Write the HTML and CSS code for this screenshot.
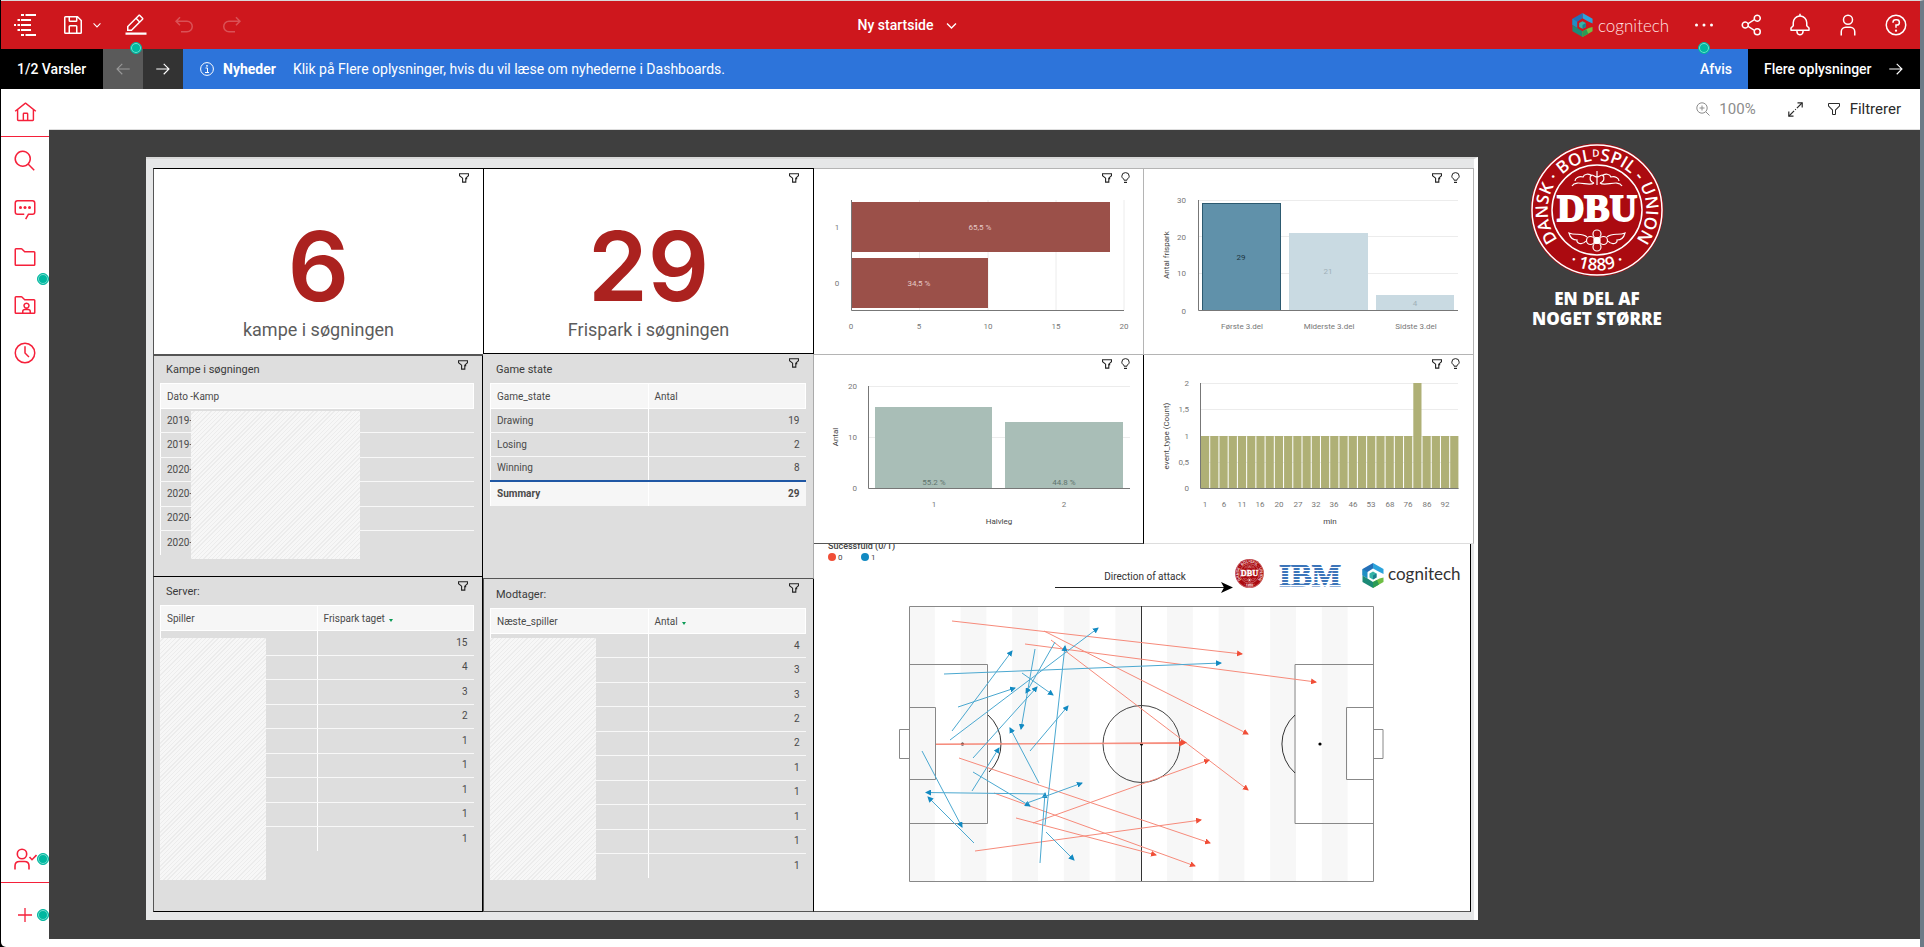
FILE: index.html
```html
<!DOCTYPE html>
<html lang="da">
<head>
<meta charset="utf-8">
<title>Ny startside</title>
<link rel="stylesheet" href="styles.css">
</head>
<body>
<svg class="defs" aria-hidden="true">
  <symbol id="i-filter" viewBox="0 0 32 32"><path d="M18,28H14a2,2,0,0,1-2-2V18.41L4.59,11A2,2,0,0,1,4,9.59V6A2,2,0,0,1,6,4H26a2,2,0,0,1,2,2V9.59A2,2,0,0,1,27.41,11L20,18.41V26A2,2,0,0,1,18,28ZM6,6V9.59l8,8V26h4V17.59l8-8V6Z"/></symbol>
  <symbol id="i-pin" viewBox="0 0 10 10"><path d="M.5.8h9v1.8L6.8 5.2v3.9H3.6V5.2L.5 2.6z" fill="none" stroke="currentColor" stroke-width="1.1"/><path d="M6.8 5h1.4v1.3H6.8z"/></symbol>
  <symbol id="i-bulb" viewBox="0 0 9 12"><path d="M3 8.2V7.3C1.600 6.500.8 5.400.8 4.200a3.700 3.600 0 0 1 7.400 0C8.200 5.400 7.400 6.500 6 7.300v.9z" fill="none" stroke="currentColor" stroke-width="1"/><path d="M3 9.800h3v1.200H3z"/></symbol>
  <symbol id="i-right" viewBox="0 0 32 32"><path d="M18 6L16.570 7.393 24.150 15H4V17H24.150L16.570 24.573 18 26 28 16z"/></symbol>
  <symbol id="i-chevron" viewBox="0 0 16 16"><path d="M2.500 5.500L8 11l5.500-5.500" fill="none" stroke="currentColor" stroke-width="1.700"/></symbol>
  <symbol id="i-undo" viewBox="0 0 32 32"><path d="M20,10H7.815l3.587-3.586L10,5,4,11,10,17l1.402-1.415L7.818,12H20a6,6,0,0,1,0,12H12v2h8a8,8,0,0,0,0-16Z"/></symbol>
  <symbol id="i-cog" viewBox="0 0 42 50">
    <path d="M21 0L42 12v10l-8-4-13-7z" fill="#2ba3dc"/>
    <path d="M21 0L0 12v13l10-7 11-7z" fill="#2470b8"/>
    <path d="M0 12v13l10 6V18z" fill="#1f8fc4"/>
    <path d="M0 25v13l21 12V38L10 31z" fill="#1c8a76"/>
    <path d="M21 50V38l13-7 8-2v9z" fill="#6fbe44"/>
    <path d="M21 50V38l8-4 4 9z" fill="#2c9b55"/>
    <path d="M21 17l7 4v8l-7 4-7-4v-8z" fill="#35b3a6"/><path d="M21 25l7-4v8l-7 4z" fill="#1b7f8c"/>
  </symbol>
</svg>

<div class="app">
  <header class="topbar">
    <div class="tools">
      <button class="tool" aria-label="Menu"><svg width="22" height="22" viewBox="0 0 22 22"><path d="M7 1h3M11.500 1H22M3.500 6H6M7 6h10M0 11h2M3.500 11H6M7 11h10M3.500 16H6M7 16h10M7 21h3M11.500 21H22" stroke="currentColor" stroke-width="2"/></svg></button>
      <button class="tool tool-save" aria-label="Gem"><svg width="24" height="24" viewBox="0 0 32 32"><path d="M27.710,9.290l-5-5A1,1,0,0,0,22,4H6A2,2,0,0,0,4,6V26a2,2,0,0,0,2,2H26a2,2,0,0,0,2-2V10A1,1,0,0,0,27.710,9.290ZM12,6h8v4H12Zm8,20H12V18h8Zm2,0V18a2,2,0,0,0-2-2H12a2,2,0,0,0-2,2v8H6V6h4v4a2,2,0,0,0,2,2h8a2,2,0,0,0,2-2V6.410l4,4V26Z"/></svg></button>
      <button class="tool tool-narrow" aria-label="Flere gem-valg"><svg width="10" height="10"><use href="#i-chevron"/></svg></button>
      <button class="tool" aria-label="Rediger"><svg width="24" height="24" viewBox="0 0 32 32"><path d="M2 26H30V29H2zM25.400 9c.8-.8.8-2 0-2.800l-3.600-3.600c-.8-.8-2-.8-2.800 0l-15 15V24h6.400L25.400 9zM20.400 4L24 7.600l-3 3L17.400 7 20.400 4zM6 22v-3.600l10-10 3.600 3.600-10 10H6z"/></svg><i class="beacon beacon-low"></i></button>
      <button class="tool faded" aria-label="Fortryd" disabled><svg width="24" height="24"><use href="#i-undo"/></svg></button>
      <button class="tool faded flip" aria-label="Annuller fortryd" disabled><svg width="24" height="24"><use href="#i-undo"/></svg></button>
    </div>
    <button class="title">Ny startside <svg width="13" height="13"><use href="#i-chevron"/></svg></button>
    <div class="brand"><svg width="21" height="24"><use href="#i-cog"/></svg>cognitech</div>
    <div class="tools">
      <button class="tool" aria-label="Mere"><svg width="24" height="24" viewBox="0 0 32 32"><circle cx="6" cy="16" r="2"/><circle cx="16" cy="16" r="2"/><circle cx="26" cy="16" r="2"/></svg><i class="beacon beacon-low"></i></button>
      <button class="tool" aria-label="Del"><svg width="24" height="24" viewBox="0 0 32 32"><path d="M23,20a5,5,0,0,0-3.890,1.890L11.800,17.320a4.460,4.460,0,0,0,0-2.640l7.310-4.570A5,5,0,1,0,18,7a4.790,4.790,0,0,0,.2,1.320l-7.310,4.570a5,5,0,1,0,0,6.220l7.310,4.570A4.790,4.790,0,0,0,18,25a5,5,0,1,0,5-5ZM23,4a3,3,0,1,1-3,3A3,3,0,0,1,23,4ZM7,19a3,3,0,1,1,3-3A3,3,0,0,1,7,19Zm16,9a3,3,0,1,1,3-3A3,3,0,0,1,23,28Z"/></svg></button>
      <button class="tool" aria-label="Notifikationer"><svg width="24" height="24" viewBox="0 0 32 32"><path d="M28.707,19.293,26,16.586V13a10.014,10.014,0,0,0-9-9.949V1H15V3.051A10.014,10.014,0,0,0,6,13v3.586L3.293,19.293A1,1,0,0,0,3,20v3a1,1,0,0,0,1,1h7v.777a5.152,5.152,0,0,0,4.500,5.199A5.006,5.006,0,0,0,21,25V24h7a1,1,0,0,0,1-1V20A1,1,0,0,0,28.707,19.293ZM19,25a3,3,0,0,1-6,0V24h6Zm8-3H5V20.414L7.707,17.707A1,1,0,0,0,8,17V13a8,8,0,0,1,16,0v4a1,1,0,0,0,.293.707L27,20.414Z"/></svg></button>
      <button class="tool" aria-label="Profil"><svg width="24" height="24" viewBox="0 0 32 32"><path d="M16 4a5 5 0 1 1-5 5 5 5 0 0 1 5-5m0-2a7 7 0 1 0 7 7A7 7 0 0 0 16 2zM26 30H24V25a5 5 0 0 0-5-5H13a5 5 0 0 0-5 5v5H6V25a7 7 0 0 1 7-7h6a7 7 0 0 1 7 7z"/></svg></button>
      <button class="tool" aria-label="Hjælp"><svg width="24" height="24" viewBox="0 0 32 32"><path d="M16,2A14,14,0,1,0,30,16,14,14,0,0,0,16,2Zm0,26A12,12,0,1,1,28,16,12,12,0,0,1,16,28Z"/><circle cx="16" cy="23.500" r="1.500"/><path d="M17,8H15.500A4.490,4.490,0,0,0,11,12.500V13h2v-.5A2.500,2.500,0,0,1,15.500,10H17a2.500,2.500,0,0,1,0,5H15v4.500h2V17a4.500,4.500,0,0,0,0-9Z"/></svg></button>
    </div>
  </header>

  <section class="notice">
    <div class="notice-count">1/2 Varsler</div>
    <button class="notice-nav notice-prev flip" aria-label="Forrige" disabled><svg width="18" height="18"><use href="#i-right"/></svg></button>
    <button class="notice-nav" aria-label="Næste"><svg width="18" height="18"><use href="#i-right"/></svg></button>
    <div class="notice-text">
      <svg width="14" height="14" viewBox="0 0 14 14"><circle cx="7" cy="7" r="6.400" fill="none" stroke="currentColor"/><path d="M5.500 6h2v4M5 10.500h4" fill="none" stroke="currentColor"/><circle cx="7" cy="3.800" r=".9"/></svg>
      <strong>Nyheder</strong>
      <span>Klik på Flere oplysninger, hvis du vil læse om nyhederne i Dashboards.</span>
    </div>
    <button class="notice-dismiss">Afvis</button>
    <button class="notice-more">Flere oplysninger <svg width="18" height="18"><use href="#i-right"/></svg></button>
  </section>

  <div class="body">
    <nav class="side">
      <button class="side-btn side-home" aria-label="Hjem"><svg width="23" height="23" viewBox="0 0 32 32"><path d="M16.612,2.214a1.010,1.010,0,0,0-1.243,0L1,13.419l1.243,1.572L4,13.621V26a2.004,2.004,0,0,0,2,2H26a2.004,2.004,0,0,0,2-2V13.630L29.757,15,31,13.428ZM18,26H14V18h4Zm2,0V18a2.002,2.002,0,0,0-2-2H14a2.002,2.002,0,0,0-2,2v8H6V12.062l10-7.790,10,7.800V26Z"/></svg></button>
      <button class="side-btn" aria-label="Søg"><svg width="24" height="24" viewBox="0 0 32 32"><path d="M29,27.586l-7.552-7.552a11.018,11.018,0,1,0-1.414,1.414L27.586,29ZM4,13a9,9,0,1,1,9,9A9.010,9.010,0,0,1,4,13Z"/></svg></button>
      <button class="side-btn" aria-label="Assistent"><svg width="24" height="24" viewBox="0 0 32 32"><path d="M17.740,30,16,29l4-7h6a2,2,0,0,0,2-2V8a2,2,0,0,0-2-2H6A2,2,0,0,0,4,8V20a2,2,0,0,0,2,2h9v2H6a4,4,0,0,1-4-4V8A4,4,0,0,1,6,4H26a4,4,0,0,1,4,4V20a4,4,0,0,1-4,4H21.160Z"/><circle cx="10" cy="14" r="2"/><circle cx="16" cy="14" r="2"/><circle cx="22" cy="14" r="2"/></svg></button>
      <button class="side-btn" aria-label="Indhold"><svg width="24" height="24" viewBox="0 0 32 32"><path d="M11.170,6l3.420,3.410.58.59H28V26H4V6h7.170m0-2H4A2,2,0,0,0,2,6V26a2,2,0,0,0,2,2H28a2,2,0,0,0,2-2V10a2,2,0,0,0-2-2H16L12.590,4.590A2,2,0,0,0,11.170,4Z"/></svg><i class="beacon beacon-corner"></i></button>
      <button class="side-btn" aria-label="Delt indhold"><svg width="24" height="24" viewBox="0 0 32 32"><path d="M11.170,6l3.420,3.410.58.59H28V26H4V6h7.170m0-2H4A2,2,0,0,0,2,6V26a2,2,0,0,0,2,2H28a2,2,0,0,0,2-2V10a2,2,0,0,0-2-2H16L12.590,4.590A2,2,0,0,0,11.170,4Z"/><path d="M18 13.500a3.300 3.300 0 1 0 .01 0M13 27v-2.500c0-2 1.500-2.500 3-2.500h4c1.500 0 3 .5 3 2.500V27" fill="none" stroke="currentColor" stroke-width="2"/></svg></button>
      <button class="side-btn" aria-label="Seneste"><svg width="24" height="24" viewBox="0 0 32 32"><path d="M16,30A14,14,0,1,1,30,16,14,14,0,0,1,16,30ZM16,4A12,12,0,1,0,28,16,12,12,0,0,0,16,4ZM20.590,22,15,16.410V7h2v8.580l5,5.010L20.590,22z"/></svg></button>
      <button class="side-btn side-admin" aria-label="Administrer"><svg width="24" height="24" viewBox="0 0 24 24"><g fill="none" stroke="currentColor" stroke-width="1.600"><circle cx="9" cy="7" r="4.700"/><path d="M2 22.500V19c0-2.800 2-4.500 4.500-4.500h5c2.500 0 4.500 1.700 4.500 4.500v3.500M16.500 10l2.500 2.700L23.500 8"/></g></svg><i class="beacon beacon-mid"></i></button>
      <button class="side-btn side-new" aria-label="Ny"><svg width="14" height="14" viewBox="0 0 14 14"><path d="M7 0v14M0 7h14" stroke="currentColor" stroke-width="1.300"/></svg><i class="beacon beacon-mid"></i></button>
    </nav>

    <div class="content">
      <div class="viewbar">
        <span class="zoom"><svg width="14" height="14" viewBox="0 0 14 14"><g fill="none" stroke="currentColor"><circle cx="6" cy="6" r="5.200"/><path d="M9.800 9.800L13.500 13.500M6 3.500v5M3.500 6h5"/></g></svg>100%</span>
        <button class="viewbtn viewbtn-icon" aria-label="Fuld skærm"><svg width="15" height="15" viewBox="0 0 15 15"><path d="M9.500.8h4.700V5.500M.8 9.500v4.700H5.500" fill="none" stroke="currentColor" stroke-width="1.200"/><path d="M14 1L1 14" fill="none" stroke="currentColor" stroke-width="1.200" stroke-dasharray="7.200 1.500 1 1.500"/></svg></button>
        <button class="viewbtn"><svg width="16" height="16"><use href="#i-filter"/></svg>Filtrerer</button>
      </div>

      <main class="stage">
        <div class="canvas">
          <div class="col">
            <section class="panel kpi kpi-a">
              <div class="acts"><svg width="10" height="10"><use href="#i-pin"/></svg></div>
              <div class="kpi-num">6</div><div class="kpi-label">kampe i søgningen</div>
            </section>
            <section class="panel list list-games">
              <div class="acts"><svg width="10" height="10"><use href="#i-pin"/></svg></div>
              <h2>Kampe i søgningen</h2>
              <table class="grid">
                <thead><tr><th>Dato -Kamp</th></tr></thead>
                <tbody><tr><td>2019-</td></tr><tr><td>2019-</td></tr><tr><td>2020-</td></tr><tr><td>2020-</td></tr><tr><td>2020-</td></tr><tr><td>2020-</td></tr></tbody>
              </table>
              <div class="mask mask-games"></div>
            </section>
            <section class="panel list list-server">
              <div class="acts"><svg width="10" height="10"><use href="#i-pin"/></svg></div>
              <h2>Server:</h2>
              <table class="grid">
                <thead><tr><th>Spiller</th><th>Frispark taget <i class="sort"></i></th></tr></thead>
                <tbody><tr><td></td><td>15</td></tr><tr><td></td><td>4</td></tr><tr><td></td><td>3</td></tr><tr><td></td><td>2</td></tr><tr><td></td><td>1</td></tr><tr><td></td><td>1</td></tr><tr><td></td><td>1</td></tr><tr><td></td><td>1</td></tr><tr><td></td><td>1</td></tr></tbody>
              </table>
              <div class="mask mask-players"></div>
            </section>
          </div>

          <div class="col">
            <section class="panel kpi kpi-b">
              <div class="acts"><svg width="10" height="10"><use href="#i-pin"/></svg></div>
              <div class="kpi-num">29</div><div class="kpi-label">Frispark i søgningen</div>
            </section>
            <section class="panel list list-state">
              <div class="acts"><svg width="10" height="10"><use href="#i-pin"/></svg></div>
              <h2>Game state</h2>
              <table class="grid">
                <thead><tr><th>Game_state</th><th>Antal</th></tr></thead>
                <tbody><tr><td>Drawing</td><td>19</td></tr><tr><td>Losing</td><td>2</td></tr><tr><td>Winning</td><td>8</td></tr></tbody>
                <tfoot><tr><td>Summary</td><td>29</td></tr></tfoot>
              </table>
            </section>
            <section class="panel list list-receiver">
              <div class="acts"><svg width="10" height="10"><use href="#i-pin"/></svg></div>
              <h2>Modtager:</h2>
              <table class="grid">
                <thead><tr><th>Næste_spiller</th><th>Antal <i class="sort"></i></th></tr></thead>
                <tbody><tr><td></td><td>4</td></tr><tr><td></td><td>3</td></tr><tr><td></td><td>3</td></tr><tr><td></td><td>2</td></tr><tr><td></td><td>2</td></tr><tr><td></td><td>1</td></tr><tr><td></td><td>1</td></tr><tr><td></td><td>1</td></tr><tr><td></td><td>1</td></tr><tr><td></td><td>1</td></tr></tbody>
              </table>
              <div class="mask mask-players"></div>
            </section>
          </div>

          <div class="wide">
            <div class="charts">
              <section class="panel chart">
                <div class="acts"><svg width="10" height="10"><use href="#i-pin"/></svg><svg width="9" height="12"><use href="#i-bulb"/></svg></div>
                <svg class="plot" viewBox="814 169 329 185">
                  <path class="rule" d="M919.500 200v110M988 200v110M1056 200v110M1124 200v110"/>
                  <rect x="851" y="202" width="259" height="50" fill="#9b5049"/><rect x="851" y="258" width="137" height="50" fill="#9b5049"/>
                  <path class="axis" d="M851.500 200v110.500H1124"/>
                  <g class="lab mid"><text x="980" y="230" class="on-red">65,5 %</text><text x="919" y="286" class="on-red">34,5 %</text>
                  <text x="837" y="230">1</text><text x="837" y="286">0</text>
                  <text x="851" y="329">0</text><text x="919" y="329">5</text><text x="988" y="329">10</text><text x="1056" y="329">15</text><text x="1124" y="329">20</text></g>
                </svg>
              </section>
              <section class="panel chart">
                <div class="acts"><svg width="10" height="10"><use href="#i-pin"/></svg><svg width="9" height="12"><use href="#i-bulb"/></svg></div>
                <svg class="plot" viewBox="1144 169 329 185">
                  <path class="rule" d="M1199 200.500h259M1199 236.500h259M1199 273.500h259"/>
                  <rect x="1202.500" y="203.500" width="78" height="107" fill="#6091aa" stroke="#2c5a70"/><rect x="1289" y="233" width="79" height="78" fill="#c9dae2"/><rect x="1376" y="295" width="78" height="16" fill="#c9dae2"/>
                  <path class="axis" d="M1198.500 200v110.500H1458"/>
                  <g class="lab mid"><text x="1241" y="260" class="dark">29</text><text x="1328" y="274" class="pale">21</text><text x="1415" y="306" class="pale">4</text>
                  <text x="1242" y="329">Første 3.del</text><text x="1329" y="329">Miderste 3.del</text><text x="1416" y="329">Sidste 3.del</text>
                  <text class="name" transform="translate(1169 255) rotate(-90)">Antal frispark</text></g>
                  <g class="lab end"><text x="1186" y="203">30</text><text x="1186" y="240">20</text><text x="1186" y="276">10</text><text x="1186" y="314">0</text></g>
                </svg>
              </section>
              <section class="panel chart chart-dark">
                <div class="acts"><svg width="10" height="10"><use href="#i-pin"/></svg><svg width="9" height="12"><use href="#i-bulb"/></svg></div>
                <svg class="plot" viewBox="814 355 329 188">
                  <path class="rule" d="M869 386.500h261M869 437.500h261"/>
                  <rect x="875" y="407" width="117" height="82" fill="#a9beb7"/><rect x="1005" y="422" width="118" height="67" fill="#a9beb7"/>
                  <path class="axis" d="M868.500 386v102.500H1130"/>
                  <g class="lab mid"><text x="934" y="485" class="inbar">55.2 %</text><text x="1064" y="485" class="inbar">44.8 %</text>
                  <text x="934" y="507">1</text><text x="1064" y="507">2</text><text class="name" x="999" y="524">Halvleg</text>
                  <text class="name" transform="translate(838 437) rotate(-90)">Antal</text></g>
                  <g class="lab end"><text x="857" y="389">20</text><text x="857" y="440">10</text><text x="857" y="491">0</text></g>
                </svg>
              </section>
              <section class="panel chart chart-light">
                <div class="acts"><svg width="10" height="10"><use href="#i-pin"/></svg><svg width="9" height="12"><use href="#i-bulb"/></svg></div>
                <svg class="plot" viewBox="1144 355 329 188">
                  <path class="rule" d="M1201 383.500h257M1201 409.500h257M1201 436.500h257M1201 462.500h257"/>
                  <path d="M1201 462.500H1458.600" stroke="#afb076" stroke-width="53" stroke-dasharray="8.200 1.030"/>
                  <path d="M1413.300 409.500h8.200" stroke="#afb076" stroke-width="53"/>
                  <path class="axis" d="M1200.500 383v105.500H1458.500"/>
                  <g class="lab mid"><text x="1205" y="507">1</text><text x="1224" y="507">6</text><text x="1242" y="507">11</text><text x="1260" y="507">16</text><text x="1279" y="507">20</text><text x="1298" y="507">27</text><text x="1316" y="507">32</text><text x="1334" y="507">36</text><text x="1353" y="507">46</text><text x="1371" y="507">53</text><text x="1390" y="507">68</text><text x="1408" y="507">76</text><text x="1427" y="507">86</text><text x="1445" y="507">92</text>
                  <text class="name" x="1330" y="524">min</text><text class="name" transform="translate(1169 436) rotate(-90)">event_type (Count)</text></g>
                  <g class="lab end"><text x="1189" y="386">2</text><text x="1189" y="412">1,5</text><text x="1189" y="439">1</text><text x="1189" y="465">0,5</text><text x="1189" y="491">0</text></g>
                </svg>
              </section>
            </div>
            <section class="panel pitch">
              <svg class="plot" viewBox="814 544 656 367">
                <defs>
                  <marker id="m-red" viewBox="0 0 6 6" refX="5" refY="3" markerWidth="6" markerHeight="6" markerUnits="userSpaceOnUse" orient="auto"><path d="M0 0l6 3-6 3z" fill="#f04e37"/></marker>
                  <marker id="m-blue" viewBox="0 0 6 6" refX="5" refY="3" markerWidth="6" markerHeight="6" markerUnits="userSpaceOnUse" orient="auto"><path d="M0 0l6 3-6 3z" fill="#128ac2"/></marker>
                  <pattern id="bands" width="61" height="3" patternUnits="userSpaceOnUse" y="562"><rect width="61" height="2" fill="#3b74b9"/></pattern>
                </defs>
                <g class="lab"><text class="name legend" x="828" y="549">Sucessfuld (0/1)</text><text class="name" x="838" y="560">0</text><text class="name" x="871" y="560">1</text></g>
                <circle cx="832" cy="557" r="4" fill="#f04e37"/><circle cx="865" cy="557" r="4" fill="#128ac2"/>
                <text class="direction" x="1145" y="580">Direction of attack</text>
                <path d="M1055 587.500h170" stroke="#222"/><path d="M1221 582l12 5.500-12 5.500 3-5.500z"/>
                <use href="#dbu" transform="translate(1235 559) scale(.216)"/>
                <text class="ibm" x="1310" y="586" fill="url(#bands)" stroke="url(#bands)">IBM</text>
                <use href="#i-cog" x="1362" y="563" width="22" height="25"/>
                <text class="cogname" x="1388" y="580">cognitech</text>
                <path d="M909 744H1373.500" stroke="#f7f7f7" stroke-width="275" stroke-dasharray="25.800 25.800"/>
                <g fill="none" stroke="#888">
                  <path d="M909.500 606.500h464v275h-464zM909 664.500h78.500v159H909M909 707.500h26.500v72H909M909 729.500h-9.500v29h9.500M1373.500 664.500h-78.500v159h78.500M1373.500 707.500h-27v72h27M1373.500 729.500h9.500v29h-9.500"/>
                  <path d="M1141.500 606v275M988 715a38.700 38.700 0 0 1 1 57M1295 715a38.700 38.700 0 0 0 0 58" stroke="#333"/><circle cx="1141.500" cy="744" r="38.500" stroke="#444"/>
                </g>
                <circle cx="962.500" cy="744" r="1.600"/><circle cx="1141.500" cy="744" r="1.600"/><circle cx="1320" cy="744" r="1.600"/>
                <g class="miss"><path d="M952 621L1242 654"/><path d="M1044 631L1248 734"/><path d="M1025 644L1316 682"/><path d="M1051 640L1248 790"/><path d="M936 744.500L1186 742.500"/><path d="M936 744L1184 743.500"/><path d="M959 758L1210 843"/><path d="M1033 823L1209 760"/><path d="M994 793L1195 866"/><path d="M1016 818L1156 855"/><path d="M975 851L1201 820"/></g>
                <g class="hit"><path d="M952 731L1012 651"/><path d="M950 740L1098 628"/><path d="M944 674L1221 663"/><path d="M958 707L1015 688"/><path d="M1022 673L1053 695"/><path d="M1035 649L1021 729"/><path d="M1055 642L1026 693"/><path d="M973 758L1037 687"/><path d="M1030 751L1068 706"/><path d="M1039 783L1010 728"/><path d="M1040 863L1045 793"/><path d="M1045 825L1065 646"/><path d="M1045 794L926 792.500"/><path d="M922 751L962 827"/><path d="M974 843L928 797"/><path d="M973 772L1030 806"/><path d="M1027 803L1082 783"/><path d="M972 791L999 748"/><path d="M1046 832L1074 860"/></g>
              </svg>
            </section>
          </div>
        </div>

        <aside class="club">
          <svg width="134" height="134" viewBox="0 0 134 134" role="img" aria-label="DBU">
            <g id="dbu">
              <circle cx="67" cy="67" r="66.500" fill="#ab0a10"/>
              <circle cx="67" cy="67" r="65" fill="none" stroke="#fff" stroke-width="1.500"/>
              <circle cx="67" cy="67" r="45" fill="none" stroke="#fff" stroke-width="1.500"/>
              <path id="dbu-top" d="M32 101.500A49.200 49.200 0 1 1 102 101.500" fill="none"/>
              <path id="dbu-low" d="M37 119.500A60.500 60.500 0 0 0 97 119.500" fill="none"/>
              <g fill="#fff" font-family="'Open Sans',sans-serif" font-weight="600" font-size="17" text-anchor="middle">
                <text><textPath href="#dbu-top" startOffset="50%">DANSK · BOL<tspan font-size="10" dy="-4">D</tspan><tspan dy="4">SPIL - UNION</tspan></textPath></text>
                <text><textPath href="#dbu-low" startOffset="50%">· 1889 ·</textPath></text>
              </g>
              <text fill="#fff" font-family="'Liberation Serif',serif" font-weight="700" font-size="38" x="67" y="78" text-anchor="middle" stroke="#fff" stroke-width="1.800">DBU</text>
              <g fill="none" stroke="#fff" stroke-width="1.200">
                <path d="M64 40c-4-1-5-5-3-8 3 0 4 2 6 2s3-2 6-2c2 3 1 7-3 8M62 33c-3-3-8-2-9 1-4-1-8 1-8 4M72 33c3-3 8-2 9 1 4-1 8 1 8 4M64 40c-5 4-18-4-22 3M70 40c5 4 18-4 22 3M67 28v14"/>
                <circle cx="67" cy="97.500" r="3" fill="#fff"/><circle cx="67" cy="91" r="4"/><circle cx="67" cy="104" r="4"/><circle cx="60.500" cy="97.500" r="4"/><circle cx="73.500" cy="97.500" r="4"/>
                <path d="M56 98c-4 5-10 2-9-1-5 0-7-3-8-7 7 3 12-1 18 4M78 98c4 5 10 2 9-1 5 0 7-3 8-7-7 3-12-1-18 4"/>
              </g>
            </g>
          </svg>
          <p>EN DEL AF<br>NOGET STØRRE</p>
        </aside>
      </main>
    </div>
  </div>
</div>
</body>
</html>
```

FILE: styles.css
```css
* { box-sizing: border-box; }
body { margin: 0; background: #000; font-family: Roboto, "Liberation Sans", sans-serif; font-size: 14px; }
button { font: inherit; color: inherit; background: none; border: 0; padding: 0; margin: 0; }
svg { display: block; fill: currentColor; flex: none; }
.defs { position: absolute; width: 0; height: 0; }
.app { display: flex; flex-direction: column; min-height: 100vh; margin-left: 1px; background: #fff; border-top: 1px solid #d9d9d9; border-right: 4px solid #6c7b87; border-bottom-left-radius: 5px; }

.topbar { display: flex; align-items: center; height: 48px; background: #ce171d; color: #fff; }
.tools { display: flex; height: 100%; }
.tool { position: relative; width: 48px; display: flex; align-items: center; justify-content: center; }
.tool-save { width: 42px; padding-left: 6px; }
.tool-narrow { width: 21px; justify-content: flex-start; padding-left: 1px; }
.faded { opacity: .25; }
.flip svg { transform: scaleX(-1); }
.title { flex: 1; display: flex; align-items: center; justify-content: center; gap: 12px; padding-right: 12px; font-weight: 500; }
.brand { display: flex; align-items: center; gap: 5px; width: 108px; font-family: Lato, sans-serif; font-weight: 300; font-size: 17px; color: #ffe3e3; }

.beacon { position: absolute; width: 12px; height: 12px; border-radius: 50%; background: #00b8a0; border: 1px solid #00b8a0; box-shadow: inset 0 0 0 1px #7fe0d3; z-index: 2; }
.beacon-low { left: 18px; bottom: -5px; }
.beacon-corner { right: 0; bottom: -4px; }
.beacon-mid { right: 0; top: 18px; }

.notice { display: flex; height: 40px; background: #2d74da; color: #fff; }
.notice-count { width: 102px; padding-left: 16px; line-height: 40px; background: #000; font-weight: 500; }
.notice-nav { width: 40px; display: flex; align-items: center; justify-content: center; background: #333; }
.notice-prev { background: #5a5a5a; color: #999; }
.notice-text { flex: 1; display: flex; align-items: center; padding-left: 17px; }
.notice-text strong { margin: 0 17px 0 9px; font-weight: 700; }
.notice-dismiss { padding: 0 16px; font-weight: 500; }
.notice-more { display: flex; align-items: center; justify-content: space-between; width: 172px; padding: 0 15px 0 16px; background: #000; font-weight: 500; }

.body { flex: 1; display: flex; }
.side { display: flex; flex-direction: column; width: 48px; color: #f5203a; }
.side-btn { position: relative; display: flex; align-items: center; justify-content: center; height: 48px; }
.side-home { border-bottom: 1px solid #f5203a; }
.side-admin { margin-top: auto; border-bottom: 1px solid #f5203a; }
.side-new { height: 64px; }
.side-new .beacon { top: 26px; }

.content { flex: 1; display: flex; flex-direction: column; padding-bottom: 8px; min-width: 0; }
.viewbar { display: flex; align-items: center; justify-content: flex-end; height: 41px; padding-right: 19px; border-bottom: 1px solid #ddd; color: #2b2b2b; font-size: 15px; }
.zoom { display: flex; align-items: center; gap: 9px; color: #8c8c8c; }
.viewbtn { display: flex; align-items: center; gap: 8px; }
.viewbtn-icon { padding: 0 23px 0 32px; }

.stage { flex: 1; display: flex; align-items: flex-start; padding: 13px 256px 0 97px; gap: 52px; background: #3f3f3f; }
.canvas { flex: 1; display: grid; grid-template-columns: 330px 331px minmax(0, 1fr); margin-top: 14px; padding: 9px 0 8px 7px; background: #e6e7e8; border-top: 2px solid #d8d8d8; border-right: 4px solid #fff; }
.col, .wide { display: flex; flex-direction: column; min-width: 0; }
.panel { position: relative; border: 1px solid #555; background: #fff; }
.acts { position: absolute; top: 3px; right: 14px; display: flex; align-items: center; gap: 9px; height: 12px; color: #222; }

.kpi { height: 187px; text-align: center; border-color: #000 #777 #555 #555; border-right: 0; padding-top: 45px; }
.kpi-b { height: 186px; border: 1px solid #000; }
.kpi-num { font: 600 96px/104px Inter, sans-serif; color: #ab221f; }
.kpi-label { font-size: 18px; line-height: 23px; color: #5c5c5c; }

.list { background: #dedede; padding: 0 7px; }
.list h2 { margin: 0; padding: 7px 0 6px 6px; font-size: 11px; line-height: 14px; font-weight: 400; color: #3a3a3a; }
.list-games { height: 222px; border-color: #555 #000 #000 #555; padding: 0 8px 0 6px; }
.list-server { flex: 1; border-top: 0; border-right-color: #000; border-bottom-color: #000; padding: 0 8px 0 6px; }
.list-server h2 { padding-top: 8px; }
.list-state { height: 225px; border-width: 0 1px 1px 0; border-right-color: #aaa; }
.list-receiver { flex: 1; border-width: 0 1px 1px 1px; border-right-color: #000; padding-left: 6px; }
.list-receiver h2, .list-state h2 { padding: 9px 0 6px 6px; }
.grid { width: 100%; table-layout: fixed; border-collapse: collapse; font-size: 10px; color: #4a4a4a; border-left: 1px solid #fff; }
.grid th { height: 25px; padding: 0 6px; background: #f6f6f6; text-align: left; font-weight: 400; border: 1px solid #fff; }
.grid td { padding: 0 6px; height: 24px; line-height: 12px; border-bottom: 1px solid #f8f8f8; }
.grid td + td { text-align: right; border-left: 1px solid #fff; }
.grid tbody:last-child tr:last-child td { border-bottom: 0; }
.grid tfoot td { height: 25px; background: #f6f6f6; border-top: 2px solid #1f57a4; border-bottom: 0; font-weight: 700; }
.list-games .grid { height: 172px; }
.list-server .grid { height: 246px; }
.list-receiver .grid { height: 270px; }
.sort { display: inline-block; margin-left: 2px; border: 2px solid transparent; border-top: 3px solid #0a9a55; border-bottom: 0; }
.mask { position: absolute; background: repeating-linear-gradient(135deg, #f7f7f7 0 2px, #ececec 2px 3px); }
.mask-games { left: 37px; top: 55px; width: 169px; height: 148px; }
.mask-players { left: 6px; bottom: 31px; width: 106px; height: 242px; }

.charts { display: grid; grid-template-columns: 1fr 1fr; }
.chart { border-color: #b4b4b4; border-left-width: 0; }
.chart:nth-child(n+3) { border-top: 0; }
.chart-dark { border-right-color: #000; border-bottom-color: #555; }
.chart-light { border-bottom-color: #ddd; }
.plot { width: 100%; height: auto; }
.chart .acts { right: 13px; }
.pitch { flex: 1; margin-right: 3px; border-width: 0 1px 1px 0; border-right-color: #000; }
.rule { stroke: #ececec; fill: none; }
.axis { stroke: #777; fill: none; }
.lab { font-size: 8px; fill: #777; }
.mid { text-anchor: middle; }
.end { text-anchor: end; }
.name { fill: #444; }
.legend { font-size: 9px; font-weight: 500; }
.on-red { fill: #e5c9c5; }
.dark { fill: #1d3642; }
.pale { fill: #9fb0b8; }
.inbar { fill: #5f746d; }
.direction { font-size: 10px; fill: #333; text-anchor: middle; }
.ibm { font: 700 31px "Liberation Serif", serif; text-anchor: middle; }
.cogname { font: 400 17px Lato, sans-serif; fill: #333; }
.miss path { stroke: #f68a7a; fill: none; marker-end: url(#m-red); }
.hit path { stroke: #4ba8d0; fill: none; marker-end: url(#m-blue); }

.club { width: 134px; text-align: center; color: #fff; }
.club p { margin: 12px 0 0; font: 800 17px/20px "Open Sans", sans-serif; white-space: nowrap; }
```
